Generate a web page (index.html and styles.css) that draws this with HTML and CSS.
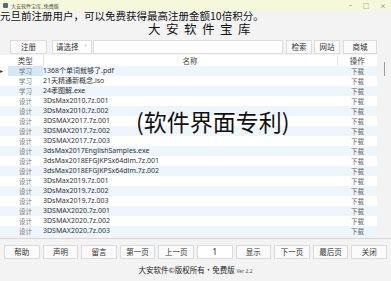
FILE: index.html
```html
<!DOCTYPE html>
<html lang="zh-CN">
<head>
    <meta charset="UTF-8">
    <title>大安软件宝库_免费版</title>
    <link rel="stylesheet" href="styles.css">
</head>
<body>
    <div class="window">
        <div class="titlebar">
            <span class="app-icon"></span>
            <span class="app-title">大安软件宝库_免费版</span>
            <span class="win-controls">
                <span>&minus;</span>
                <span>&#9633;</span>
                <span>&times;</span>
            </span>
        </div>

        <div class="notice">元旦前注册用户，可以免费获得最高注册金额10倍积分。</div>
        <div class="title">大安软件宝库</div>

        <div class="toolbar">
            <button class="btn btn-reg">注册</button>
            <div class="select">请选择<span class="arrow">&#8964;</span></div>
            <input class="search" type="text">
            <button class="btn btn-s">检索</button>
            <button class="btn btn-s">网站</button>
            <button class="btn btn-l">商城</button>
        </div>

        <div class="grid-wrap">
            <table class="grid">
                <colgroup>
                    <col class="c-ind">
                    <col class="c-type">
                    <col class="c-name">
                    <col class="c-op">
                </colgroup>
                <thead>
                    <tr>
                        <th></th>
                        <th class="sep">类型</th>
                        <th class="sep">名称</th>
                        <th>操作</th>
                    </tr>
                </thead>
                <tbody>
                    <tr class="odd"><td class="ind">&#9656;</td><td class="type selected">学习</td><td>1368个单词就够了.pdf</td><td class="op">下载</td></tr>
                    <tr><td></td><td class="type">学习</td><td>21天精通新概念.iso</td><td class="op">下载</td></tr>
                    <tr class="odd"><td></td><td class="type">学习</td><td>24孝图解.exe</td><td class="op">下载</td></tr>
                    <tr><td></td><td class="type">设计</td><td>3DsMax2010.7z.001</td><td class="op">下载</td></tr>
                    <tr class="odd"><td></td><td class="type">设计</td><td>3DsMax2010.7z.002</td><td class="op">下载</td></tr>
                    <tr><td></td><td class="type">设计</td><td>3DSMAX2017.7z.001</td><td class="op">下载</td></tr>
                    <tr class="odd"><td></td><td class="type">设计</td><td>3DSMAX2017.7z.002</td><td class="op">下载</td></tr>
                    <tr><td></td><td class="type">设计</td><td>3DSMAX2017.7z.003</td><td class="op">下载</td></tr>
                    <tr class="odd"><td></td><td class="type">设计</td><td>3dsMax2017EnglishSamples.exe</td><td class="op">下载</td></tr>
                    <tr><td></td><td class="type">设计</td><td>3dsMax2018EFGJKPSx64dlm.7z.001</td><td class="op">下载</td></tr>
                    <tr class="odd"><td></td><td class="type">设计</td><td>3dsMax2018EFGJKPSx64dlm.7z.002</td><td class="op">下载</td></tr>
                    <tr><td></td><td class="type">设计</td><td>3DsMax2019.7z.001</td><td class="op">下载</td></tr>
                    <tr class="odd"><td></td><td class="type">设计</td><td>3DsMax2019.7z.002</td><td class="op">下载</td></tr>
                    <tr><td></td><td class="type">设计</td><td>3DsMax2019.7z.003</td><td class="op">下载</td></tr>
                    <tr class="odd"><td></td><td class="type">设计</td><td>3DSMAX2020.7z.001</td><td class="op">下载</td></tr>
                    <tr><td></td><td class="type">设计</td><td>3DSMAX2020.7z.002</td><td class="op">下载</td></tr>
                    <tr class="odd"><td></td><td class="type">设计</td><td>3DSMAX2020.7z.003</td><td class="op">下载</td></tr>
                </tbody>
            </table>
            <div class="scrollbar"><span class="thumb"></span></div>
            <div class="watermark">(软件界面专利)</div>
        </div>

        <div class="pager">
            <button class="btn">帮助</button>
            <button class="btn">声明</button>
            <button class="btn">留言</button>
            <button class="btn">第一页</button>
            <button class="btn">上一页</button>
            <div class="page-no">1</div>
            <button class="btn">显示</button>
            <button class="btn">下一页</button>
            <button class="btn">最后页</button>
            <button class="btn">关闭</button>
        </div>

        <div class="footer">大安软件©版权所有·免费版 <span class="ver">Ver 2.2</span></div>
    </div>
</body>
</html>
```

FILE: styles.css
```css
body {
    margin: 0;
    font-family: "Noto Sans", "Noto Sans CJK SC", sans-serif;
    color: #222;
}
.window {
    width: 391px;
    height: 281px;
    background-color: #f3f3f3;
    display: flex;
    flex-direction: column;
    overflow: hidden;
}
.titlebar {
    height: 10px;
    background-color: #f6f8dc;
    display: flex;
    align-items: center;
    font-size: 5px;
    color: #444;
    font-family: "Noto Sans CJK SC", sans-serif;
}
.app-icon {
    width: 5px;
    height: 5px;
    margin: 0 3px 0 3px;
    background-color: #5a6a7a;
    border-radius: 1px;
}
.win-controls {
    margin-left: auto;
    display: flex;
    gap: 11px;
    padding-right: 5px;
    font-size: 6px;
    color: #666;
}
.notice {
    height: 12px;
    line-height: 12px;
    font-size: 10.5px;
    font-family: "Noto Sans CJK SC", sans-serif;
    color: #111;
    white-space: nowrap;
}
.title {
    height: 13px;
    line-height: 13px;
    padding-left: 13px;
    text-align: center;
    font-size: 12.5px;
    letter-spacing: 5.5px;
    font-family: "Noto Sans CJK SC", sans-serif;
    color: #111;
}
.toolbar {
    display: flex;
    align-items: center;
    height: 14px;
    margin-top: 5px;
    padding-left: 10px;
}
.btn {
    height: 14px;
    padding: 0;
    border: 1px solid #dcdcdc;
    background-color: #fafafa;
    font-family: "Noto Sans CJK SC", sans-serif;
    font-size: 7.5px;
    line-height: 12px;
    color: #333;
}
.btn-reg {
    width: 37px;
}
.select {
    position: relative;
    width: 40px;
    height: 14px;
    box-sizing: border-box;
    margin-left: 5px;
    padding-left: 3px;
    border: 1px solid #dcdcdc;
    background-color: #fff;
    font-family: "Noto Sans CJK SC", sans-serif;
    font-size: 7.5px;
    line-height: 12px;
    color: #333;
}
.arrow {
    position: absolute;
    right: 3px;
    top: -3px;
    font-size: 6px;
    color: #aaa;
}
.search {
    width: 190px;
    height: 14px;
    box-sizing: border-box;
    margin: 0 3px 0 1px;
    border: 1px solid #dcdcdc;
    background-color: #fff;
    padding: 0;
}
.btn-s {
    width: 26px;
    margin-right: 2px;
}
.btn-l {
    width: 34px;
    margin-left: 1px;
}
.grid-wrap {
    position: relative;
    display: flex;
    height: 183px;
    margin-top: 1px;
    border-bottom: 1px solid #d6d6d6;
}
.grid {
    width: 377px;
    table-layout: fixed;
    border-collapse: collapse;
    background-color: #fff;
    align-self: flex-start;
    font-size: 7px;
}
.c-ind { width: 8px; }
.c-type { width: 35px; }
.c-name { width: 294px; }
.c-op { width: 40px; }
.grid th {
    height: 11px;
    padding: 0;
    font-weight: normal;
    font-family: "Noto Sans CJK SC", sans-serif;
    font-size: 7.5px;
    line-height: 11px;
    color: #444;
    text-align: center;
}
.grid th.sep {
    border-right: 1px solid #e6e6e6;
}
.grid td {
    height: 10px;
    padding: 0;
    line-height: 10px;
    white-space: nowrap;
    color: #333;
}
.grid tr.odd td {
    background-color: #eef5fc;
}
.grid td.ind {
    background-color: #fff !important;
    font-size: 6px;
    color: #333;
    text-align: left;
}
.grid td.type {
    text-align: center;
    color: #777;
    font-family: "Noto Sans CJK SC", sans-serif;
    font-size: 6.5px;
}
.grid tr.odd td.selected {
    background-color: #d6e8f8;
}
.grid td.op {
    text-align: center;
    padding-left: 1px;
    color: #666;
    font-family: "Noto Sans CJK SC", sans-serif;
    font-size: 6.5px;
}
.scrollbar {
    flex: 1;
    position: relative;
}
.thumb {
    position: absolute;
    left: 7px;
    top: 7px;
    width: 1px;
    height: 14px;
    background-color: #9a9a9a;
}
.watermark {
    position: absolute;
    left: 136px;
    top: 49px;
    font-family: "Noto Sans CJK SC", sans-serif;
    font-size: 23px;
    line-height: 34px;
    color: #111;
    white-space: nowrap;
}
.pager {
    display: flex;
    gap: 3px;
    padding: 0 4px;
    margin-top: 6px;
}
.pager .btn,
.page-no {
    flex: 1;
    height: 14px;
}
.page-no {
    box-sizing: border-box;
    border: 1px solid #dcdcdc;
    background-color: #fff;
    text-align: center;
    font-size: 8px;
    line-height: 12px;
    color: #222;
}
.footer {
    margin-top: 5px;
    text-align: center;
    font-family: "Noto Sans CJK SC", sans-serif;
    font-size: 7.5px;
    line-height: 12px;
    color: #222;
}
.ver {
    font-family: "Noto Sans", sans-serif;
    font-size: 5px;
    color: #555;
}
```
